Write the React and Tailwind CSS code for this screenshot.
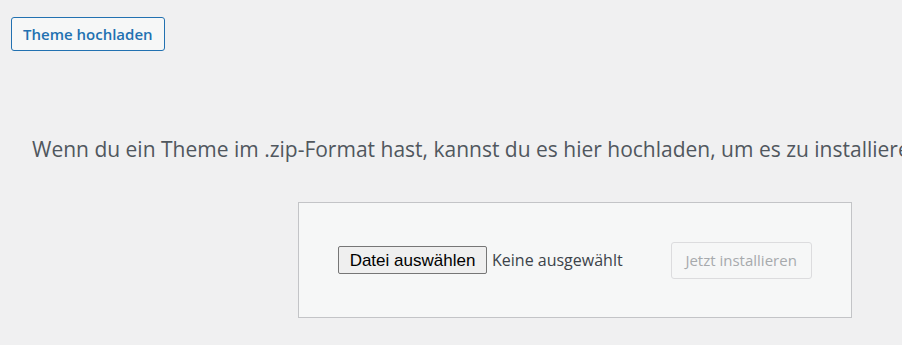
import React from "react";

const App = () => {
  return (
    <div className="w-[902px] h-[345px] overflow-hidden bg-[#f0f0f1] font-['Open_Sans',sans-serif]">
      <div className="pt-[17px] pl-[11px]">
        <button className="h-[34px] px-[11px] border border-[#2271b1] rounded-[3px] bg-[#f6f7f7] text-[#2271b1] text-[15px] font-semibold leading-none">
          Theme hochladen
        </button>
      </div>

      <p className="mt-[84px] pl-[32px] whitespace-nowrap text-[21px] leading-[28px] text-[#50575e]">
        Wenn du ein Theme im .zip-Format hast, kannst du es hier hochladen, um es zu installieren.
      </p>

      <div className="mt-[39px] ml-[298px] w-[554px] h-[116px] border border-[#c3c4c7] bg-[#f6f7f7] flex items-center pl-[39px]">
        <button className="h-[28px] w-[149px] border border-[#767676] rounded-[2px] bg-[#efefef] text-black text-[17px] font-['Liberation_Sans',sans-serif] leading-none">
          Datei auswählen
        </button>
        <span className="ml-[5px] text-[16px] text-[#3c434a]">Keine ausgewählt</span>
        <button
          disabled
          className="ml-[48px] h-[37px] w-[141px] border border-[#dcdcde] rounded-[3px] bg-[#f6f7f7] text-[#a7aaad] text-[15px] leading-none"
        >
          Jetzt installieren
        </button>
      </div>
    </div>
  );
};

export default App;
